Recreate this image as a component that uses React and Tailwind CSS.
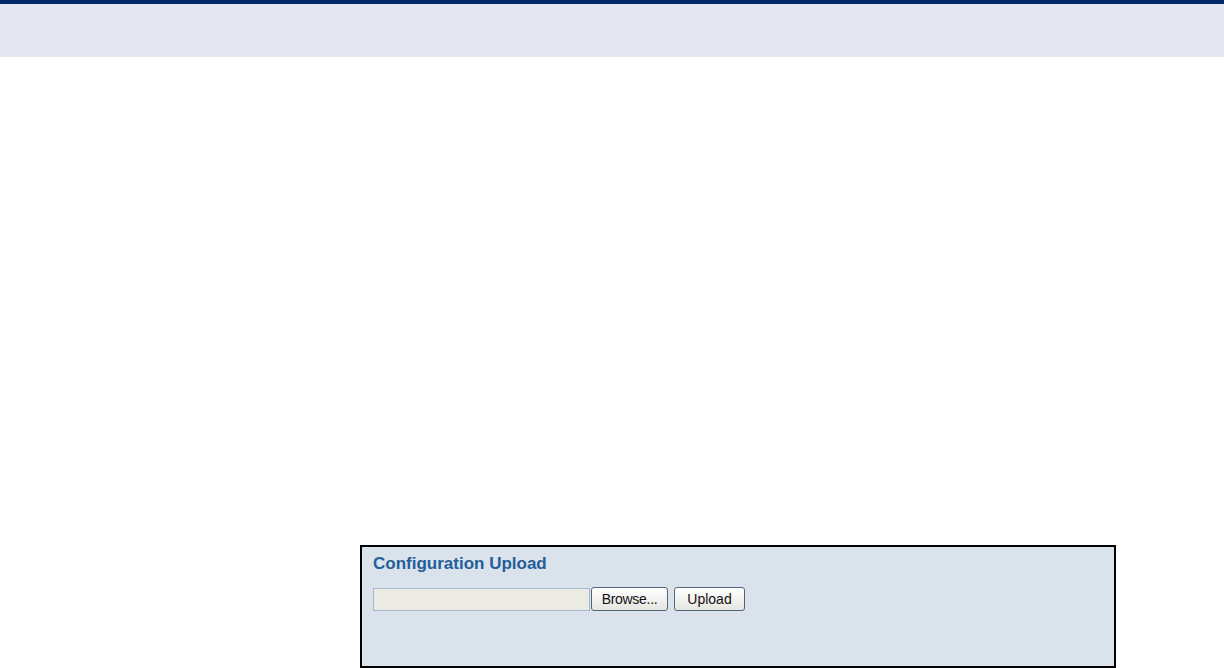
import React from 'react';

export default function App() {
  return (
    <div className="w-[1224px] h-[668px] bg-white overflow-hidden font-['Liberation_Sans',Arial,sans-serif]">
      {/* Header strip */}
      <div className="h-[4px] bg-[#002868]" />
      <div className="h-[53px] bg-[#e5e8f1]" />

      {/* Panel */}
      <div className="pt-[488px] pl-[360px]">
        <div className="w-[756px] h-[123px] border-2 border-black bg-[#dae2ec] pl-[11px] pt-[7px]">
          <h2 className="text-[17px] font-bold leading-[20px] text-[#245e99]">Configuration Upload</h2>
          <div className="flex items-center mt-[13px]">
            <div className="w-[217px] h-[23px] border border-[#a3b7cd] bg-[#ebebe4]" />
            <button className="ml-[1px] w-[77px] h-[24px] rounded-[3px] border border-[#52657b] bg-gradient-to-b from-white to-[#e6e6e0] text-[14px] tracking-[-0.3px] leading-none text-[#111]">
              Browse...
            </button>
            <button className="ml-[6px] w-[71px] h-[24px] rounded-[3px] border border-[#52657b] bg-gradient-to-b from-white to-[#e6e6e0] text-[14px] leading-none text-[#111]">
              Upload
            </button>
          </div>
        </div>
      </div>
    </div>
  );
}
